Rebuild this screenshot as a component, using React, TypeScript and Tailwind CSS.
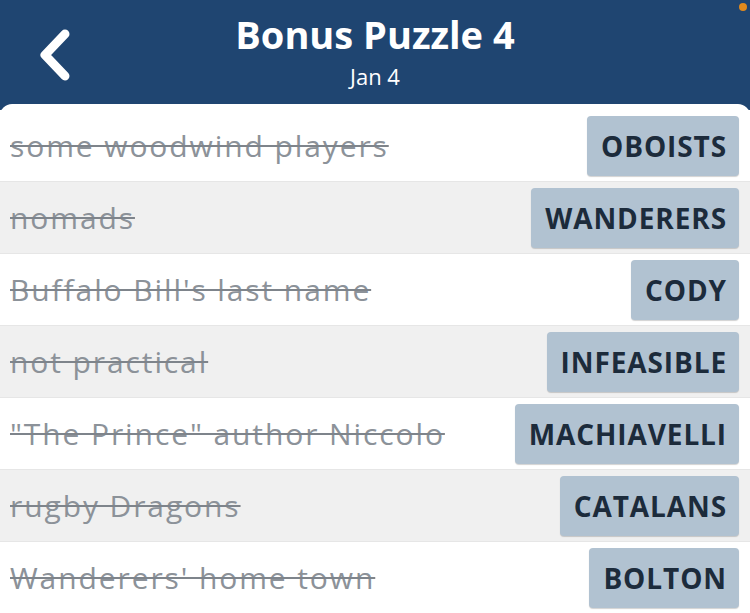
import React from "react";

type Entry = { clue: string; answer: string };

const entries: Entry[] = [
  { clue: "some woodwind players", answer: "OBOISTS" },
  { clue: "nomads", answer: "WANDERERS" },
  { clue: "Buffalo Bill's last name", answer: "CODY" },
  { clue: "not practical", answer: "INFEASIBLE" },
  { clue: "\"The Prince\" author Niccolo", answer: "MACHIAVELLI" },
  { clue: "rugby Dragons", answer: "CATALANS" },
  { clue: "Wanderers' home town", answer: "BOLTON" },
];

const font = { fontFamily: "'Open Sans', Lato, sans-serif" };

export default function App() {
  return (
    <div className="h-[613px] w-[750px] overflow-hidden bg-[#1f4571]" style={font}>
      <header className="grid h-[104px] grid-cols-[1fr_auto_1fr] items-start">
        <div className="flex pl-[36px] pt-[29px]">
          <svg width="36" height="52" viewBox="0 0 36 52">
            <path d="M29 5 L9 26 L29 47" fill="none" stroke="#ffffff" strokeWidth="9" strokeLinecap="round" strokeLinejoin="round" />
          </svg>
        </div>
        <div className="flex flex-col items-center pt-[10px]">
          <h1 className="text-[38px] font-bold leading-[48px] text-white">Bonus Puzzle 4</h1>
          <p className="mt-[4px] text-[22px] leading-[28px] text-white">Jan 4</p>
        </div>
        <div className="flex justify-end pr-[3px] pt-[3px]">
          <span className="h-[8px] w-[8px] rounded-full bg-[#e08a1e]" />
        </div>
      </header>

      <main className="flex flex-col rounded-t-[12px] bg-white pt-[6px]">
        {entries.map((e, i) => (
          <div
            key={e.answer}
            className={
              "flex h-[72px] items-center justify-between border-b border-[#e6e6e6] pl-[10px] pr-[11px] " +
              (i % 2 === 1 ? "bg-[#f0f0f0]" : "bg-white")
            }
          >
            <span className="text-[30px] tracking-[1.9px] text-[#8c9299] line-through decoration-[#7e848b] decoration-2">
              {e.clue}
            </span>
            <span className="flex h-[60px] items-center rounded-[4px] bg-[#b1c2d1] pl-[14px] pr-[12px] text-[28px] font-bold tracking-[0.9px] text-[#1c2b3b] shadow-[0_1px_1px_rgba(0,0,0,0.18)]">
              {e.answer}
            </span>
          </div>
        ))}
      </main>
    </div>
  );
}
